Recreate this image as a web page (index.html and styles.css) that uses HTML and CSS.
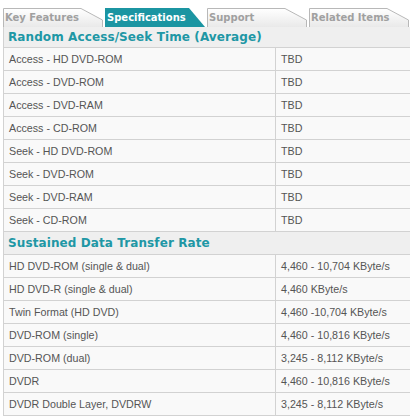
FILE: index.html
```html
<!DOCTYPE html>
<html>
<head>
<meta charset="utf-8">
<link rel="stylesheet" href="styles.css">
</head>
<body>
<div class="page">
  <div class="tabs">
    <div class="tab"><svg class="tab-bg" viewBox="0 0 100 19" preserveAspectRatio="none"><defs><linearGradient id="g" x1="0" y1="0" x2="0" y2="1"><stop offset="0" stop-color="#ffffff"/><stop offset="1" stop-color="#e9e9e9"/></linearGradient></defs><path d="M0.5 19 V0.5 H78 L99.5 12 V19" fill="url(#g)" stroke="#b8b8b8" stroke-width="1" vector-effect="non-scaling-stroke"/></svg><span class="tab-label">Key Features</span></div>
    <div class="tab active"><svg class="tab-bg" viewBox="0 0 100 19" preserveAspectRatio="none"><path d="M0 19 V0 H84 L100 19 Z" fill="#1b95a2"/></svg><span class="tab-label">Specifications</span></div>
    <div class="tab"><svg class="tab-bg" viewBox="0 0 100 19" preserveAspectRatio="none"><path d="M0.5 19 V0.5 H78 L99.5 12 V19" fill="url(#g)" stroke="#b8b8b8" stroke-width="1" vector-effect="non-scaling-stroke"/></svg><span class="tab-label">Support</span></div>
    <div class="tab"><svg class="tab-bg" viewBox="0 0 100 19" preserveAspectRatio="none"><path d="M0.5 19 V0.5 H78 L99.5 12 V19" fill="url(#g)" stroke="#b8b8b8" stroke-width="1" vector-effect="non-scaling-stroke"/></svg><span class="tab-label">Related Items</span></div>
  </div>

  <div class="section">
    <div class="heading">Random Access/Seek Time (Average)</div>
    <div class="row"><div class="c1">Access - HD DVD-ROM</div><div class="c2">TBD</div></div>
    <div class="row"><div class="c1">Access - DVD-ROM</div><div class="c2">TBD</div></div>
    <div class="row"><div class="c1">Access - DVD-RAM</div><div class="c2">TBD</div></div>
    <div class="row"><div class="c1">Access - CD-ROM</div><div class="c2">TBD</div></div>
    <div class="row"><div class="c1">Seek - HD DVD-ROM</div><div class="c2">TBD</div></div>
    <div class="row"><div class="c1">Seek - DVD-ROM</div><div class="c2">TBD</div></div>
    <div class="row"><div class="c1">Seek - DVD-RAM</div><div class="c2">TBD</div></div>
    <div class="row"><div class="c1">Seek - CD-ROM</div><div class="c2">TBD</div></div>
  </div>

  <div class="section">
    <div class="heading">Sustained Data Transfer Rate</div>
    <div class="row"><div class="c1">HD DVD-ROM (single &amp; dual)</div><div class="c2">4,460 - 10,704 KByte/s</div></div>
    <div class="row"><div class="c1">HD DVD-R (single &amp; dual)</div><div class="c2">4,460 KByte/s</div></div>
    <div class="row"><div class="c1">Twin Format (HD DVD)</div><div class="c2">4,460 -10,704 KByte/s</div></div>
    <div class="row"><div class="c1">DVD-ROM (single)</div><div class="c2">4,460 - 10,816 KByte/s</div></div>
    <div class="row"><div class="c1">DVD-ROM (dual)</div><div class="c2">3,245 - 8,112 KByte/s</div></div>
    <div class="row"><div class="c1">DVDR</div><div class="c2">4,460 - 10,816 KByte/s</div></div>
    <div class="row"><div class="c1">DVDR Double Layer, DVDRW</div><div class="c2">3,245 - 8,112 KByte/s</div></div>
    <div class="row"><div class="c1">&nbsp;</div><div class="c2">&nbsp;</div></div>
  </div>
</div>
</body>
</html>
```

FILE: styles.css
```css
html, body {
  margin: 0;
  padding: 0;
  background: #ffffff;
}

.page {
  padding: 8px 1px 0 3px;
  width: 407px;
  font-family: "Liberation Sans", Arial, sans-serif;
}

.tabs {
  display: flex;
  gap: 2px;
  height: 19px;
}

.tab {
  position: relative;
  width: 100px;
  height: 19px;
  flex: none;
}

.tab-bg {
  position: absolute;
  left: 0;
  top: 0;
  width: 100%;
  height: 100%;
  display: block;
}

.tab-label {
  position: relative;
  display: block;
  padding: 3px 0 0 2px;
  font-family: "DejaVu Sans", Verdana, sans-serif;
  font-weight: bold;
  font-size: 10px;
  line-height: 13px;
  color: #a0a0a0;
}

.tab.active .tab-label {
  color: #ffffff;
}

.heading {
  height: 20px;
  background: #efefef;
  border-bottom: 1px solid #d2d2d2;
  border-left: 1px solid #d2d2d2;
  padding-left: 4px;
  font-family: "DejaVu Sans", Verdana, sans-serif;
  font-weight: bold;
  font-size: 12px;
  line-height: 21px;
  color: #2097a5;
  letter-spacing: 0.1px;
}

.section + .section .heading {
  height: 22px;
  line-height: 22px;
}

.row {
  display: flex;
  height: 22px;
  border-bottom: 1px solid #d2d2d2;
  border-left: 1px solid #d2d2d2;
  background: #f9f9f9;
  font-size: 10.7px;
  line-height: 22px;
  color: #555555;
}

.c1 {
  width: 266px;
  flex: none;
  padding-left: 5px;
  border-right: 1px solid #d2d2d2;
}

.c2 {
  flex: 1;
  padding-left: 5px;
}
```
